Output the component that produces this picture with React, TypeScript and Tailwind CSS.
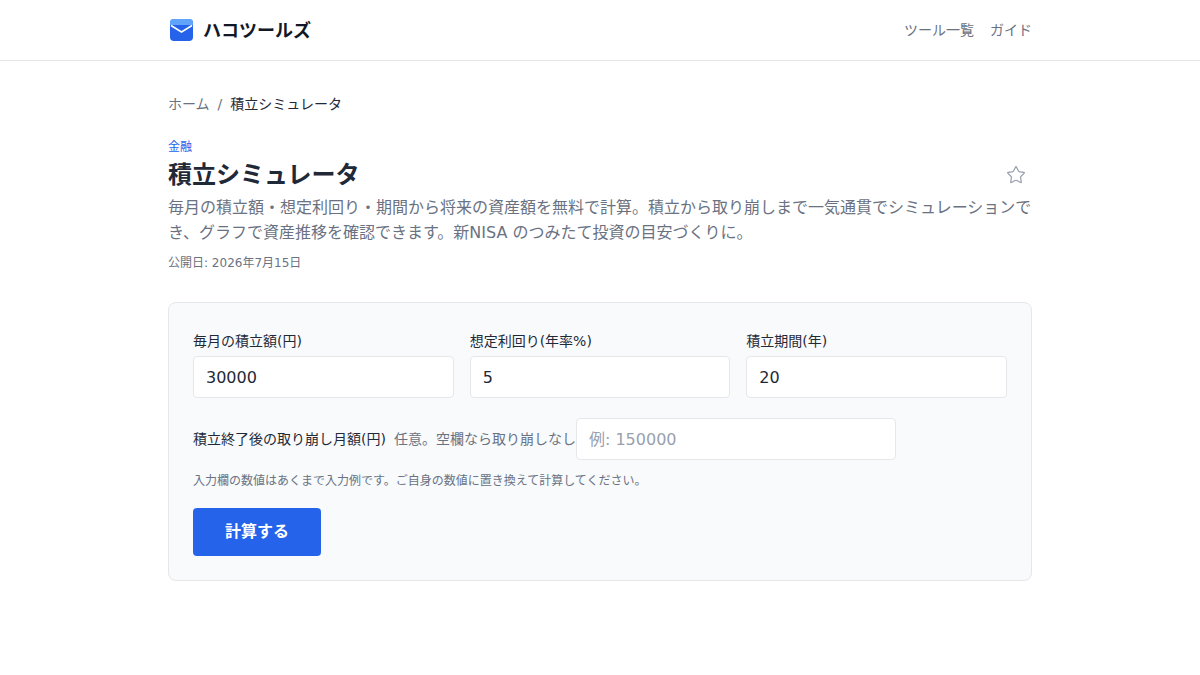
import { Star } from 'lucide-react';

const font = { fontFamily: '"DejaVu Sans", "Noto Sans CJK JP", sans-serif' };

export default function App() {
  return (
    <div className="min-h-screen bg-white text-[#1f2937]" style={font}>
      <header className="h-[61px] border-b border-gray-200">
        <div className="mx-auto flex h-full w-[864px] items-center justify-between">
          <div className="flex items-center gap-[10px] pl-[2px]">
            <svg width="23" height="22" viewBox="0 0 23 22">
              <rect x="0" y="0" width="23" height="22" rx="4" fill="#2563eb" />
              <path d="M4 0 H19 A4 4 0 0 1 23 4 V6 H0 V4 A4 4 0 0 1 4 0 Z" fill="#60a5fa" />
              <path d="M1 6.5 L11.5 13 L22 6.5" stroke="#fff" strokeWidth="1.6" fill="none" />
            </svg>
            <span className="text-[18px] font-bold text-[#111827]">ハコツールズ</span>
          </div>
          <nav className="flex gap-4 text-sm text-gray-500">
            <span>ツール一覧</span>
            <span>ガイド</span>
          </nav>
        </div>
      </header>
      <main className="mx-auto w-[864px] pt-[33px]">
        <div className="flex items-center gap-2 text-sm text-gray-500">
          <span>ホーム</span>
          <span>/</span>
          <span className="text-[#1f2937]">積立シミュレータ</span>
        </div>
        <div className="mt-[25px] text-xs text-[#2563eb]">金融</div>
        <div className="mt-[2px] flex items-center justify-between">
          <h1 className="text-2xl font-bold leading-[36px]">積立シミュレータ</h1>
          <button className="p-1.5">
            <Star className="h-5 w-5 text-gray-400" strokeWidth={1.5} />
          </button>
        </div>
        <p className="mt-[2px] text-base leading-[25px] text-gray-500">
          毎月の積立額・想定利回り・期間から将来の資産額を無料で計算。積立から取り崩しまで一気通貫でシミュレーションでき、グラフで資産推移を確認できます。新NISA のつみたて投資の目安づくりに。
        </p>
        <div className="mt-[10px] text-xs text-gray-500">公開日: 2026年7月15日</div>
        <section className="mt-[31px] rounded-lg border border-gray-200 bg-[#f8fafc] px-6 pb-6 pt-7">
          <div className="grid grid-cols-3 gap-4">
            {[
              ['毎月の積立額(円)', '30000'],
              ['想定利回り(年率%)', '5'],
              ['積立期間(年)', '20'],
            ].map(([l, v]) => (
              <div key={l}>
                <label className="mb-[5px] block text-sm">{l}</label>
                <input
                  defaultValue={v}
                  className="h-[42px] w-full rounded border border-gray-200 bg-white px-3 text-base"
                  style={font}
                />
              </div>
            ))}
          </div>
          <div className="mt-5 flex items-center">
            <label className="text-sm">積立終了後の取り崩し月額(円)</label>
            <span className="ml-2 text-sm text-gray-500">任意。空欄なら取り崩しなし</span>
            <input
              placeholder="例: 150000"
              className="h-[42px] w-[320px] rounded border border-gray-200 bg-white px-3 text-base placeholder:text-gray-400"
              style={font}
            />
          </div>
          <p className="mt-[13px] text-xs text-gray-500">入力欄の数値はあくまで入力例です。ご自身の数値に置き換えて計算してください。</p>
          <button className="mt-[19px] h-12 w-32 rounded bg-[#2563eb] text-base font-bold text-white">計算する</button>
        </section>
      </main>
    </div>
  );
}
